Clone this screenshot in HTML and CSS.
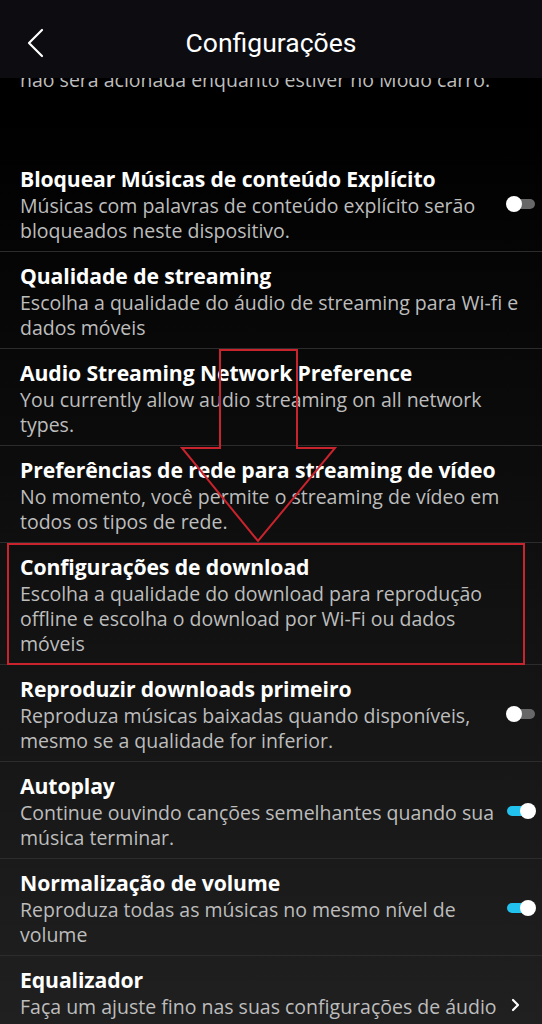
FILE: index.html
```html
<!DOCTYPE html>
<html lang="pt-BR">
<head>
<meta charset="utf-8">
<title>Configurações</title>
<link rel="stylesheet" href="styles.css">
</head>
<body>
<div class="screen">
  <header class="topbar">
    <span class="back">
      <svg width="20" height="30" viewBox="0 0 20 30"><polyline points="15,2 2,15 15,28" fill="none" stroke="#fff" stroke-width="2.2" stroke-linecap="round" stroke-linejoin="round"/></svg>
    </span>
    <h1 class="title">Configurações</h1>
  </header>

  <main class="list">
    <div class="peek"><p class="peek-text">não será acionada enquanto estiver no Modo carro.</p></div>

    <div class="row has-ctl">
      <div class="text">
        <div class="row-title">Bloquear Músicas de conteúdo Explícito</div>
        <div class="row-sub">Músicas com palavras de conteúdo explícito serão bloqueados neste dispositivo.</div>
      </div>
      <span class="toggle off"><span class="knob"></span></span>
    </div>

    <div class="row">
      <div class="text">
        <div class="row-title">Qualidade de streaming</div>
        <div class="row-sub">Escolha a qualidade do áudio de streaming para Wi-fi e dados móveis</div>
      </div>
    </div>

    <div class="row">
      <div class="text">
        <div class="row-title">Audio Streaming Network Preference</div>
        <div class="row-sub">You currently allow audio streaming on all network types.</div>
      </div>
    </div>

    <div class="row">
      <div class="text">
        <div class="row-title">Preferências de rede para streaming de vídeo</div>
        <div class="row-sub">No momento, você permite o streaming de vídeo em todos os tipos de rede.</div>
      </div>
    </div>

    <div class="row">
      <div class="text">
        <div class="row-title">Configurações de download</div>
        <div class="row-sub">Escolha a qualidade do download para reprodução offline e escolha o download por Wi-Fi ou dados móveis</div>
      </div>
    </div>

    <div class="row has-ctl">
      <div class="text">
        <div class="row-title">Reproduzir downloads primeiro</div>
        <div class="row-sub">Reproduza músicas baixadas quando disponíveis, mesmo se a qualidade for inferior.</div>
      </div>
      <span class="toggle off"><span class="knob"></span></span>
    </div>

    <div class="row has-ctl">
      <div class="text">
        <div class="row-title">Autoplay</div>
        <div class="row-sub">Continue ouvindo canções semelhantes quando sua música terminar.</div>
      </div>
      <span class="toggle on"><span class="knob"></span></span>
    </div>

    <div class="row has-ctl">
      <div class="text">
        <div class="row-title">Normalização de volume</div>
        <div class="row-sub">Reproduza todas as músicas no mesmo nível de volume</div>
      </div>
      <span class="toggle on"><span class="knob"></span></span>
    </div>

    <div class="row has-ctl row-link">
      <div class="text">
        <div class="row-title">Equalizador</div>
        <div class="row-sub">Faça um ajuste fino nas suas configurações de áudio</div>
      </div>
      <span class="chev">
        <svg width="10" height="14" viewBox="0 0 10 14"><polyline points="3,2 8,7 3,12" fill="none" stroke="#fff" stroke-width="2.2" stroke-linecap="round" stroke-linejoin="round"/></svg>
      </span>
    </div>
  </main>

  <svg class="annot" width="542" height="1024" viewBox="0 0 542 1024">
    <polygon points="220,350 297,350 297,448 335,448 258,541 182,448 220,448" fill="none" stroke="#c9232d" stroke-width="2"/>
    <rect x="8" y="544" width="516" height="120" fill="none" stroke="#c9232d" stroke-width="2"/>
  </svg>
</div>
</body>
</html>
```

FILE: styles.css
```css
* { box-sizing: border-box; }
html, body { margin: 0; padding: 0; background: #000; }
body { width: 542px; height: 1024px; overflow: hidden; font-family: "Open Sans", "Noto Sans", sans-serif; }

.screen { position: relative; width: 542px; height: 1024px; display: flex; flex-direction: column; background: linear-gradient(to bottom, #000 0px, #000 120px, #202020 1024px); }

.topbar { height: 78px; flex: none; background: #0c0c11; display: flex; align-items: center; position: relative; }
.back { width: 20px; height: 30px; margin-left: 27px; margin-top: 7px; display: flex; }
.title { position: absolute; left: 0; right: 0; top: 0; margin: 0; text-align: center; font-family: Roboto, sans-serif; font-weight: 400; font-size: 26.5px; line-height: 86px; color: #fff; pointer-events: none; }

.list { flex: 1; display: flex; flex-direction: column; }

.peek { height: 77px; overflow: hidden; flex: none; padding: 0 20px; }
.peek-text { margin: -11px 0 0; font-size: 19.5px; line-height: 25px; color: #bdbdbd; white-space: nowrap; }

.row { display: flex; align-items: center; padding: 9px 20px 8px 20px; border-bottom: 1px solid #2c2c2c; gap: 8px; }
.row.has-ctl { padding-right: 6px; }
.text { flex: 1; min-width: 0; }
.row-title { font-weight: 700; font-size: 21.2px; line-height: 29px; color: #fff; letter-spacing: -0.1px; white-space: nowrap; }
.row-sub { font-size: 19.5px; line-height: 25px; color: #bdbdbd; }

.toggle { position: relative; width: 30px; height: 16px; flex: none; }
.toggle::before { content: ""; position: absolute; top: 3px; height: 10px; border-radius: 5px; }
.toggle.off::before { left: 7px; right: 1px; background: #676767; }
.toggle.on::before { left: 1px; right: 6px; background: #22c2ef; }
.knob { position: absolute; top: 0; width: 16px; height: 16px; border-radius: 50%; background: #fff; }
.toggle.off .knob { left: 0; }
.toggle.on .knob { right: 0; }

.row-link { gap: 6px; }
.chev { width: 10px; height: 14px; flex: none; display: flex; margin-right: 16px; margin-top: 26px; }

.annot { position: absolute; left: 0; top: 0; pointer-events: none; }
```
